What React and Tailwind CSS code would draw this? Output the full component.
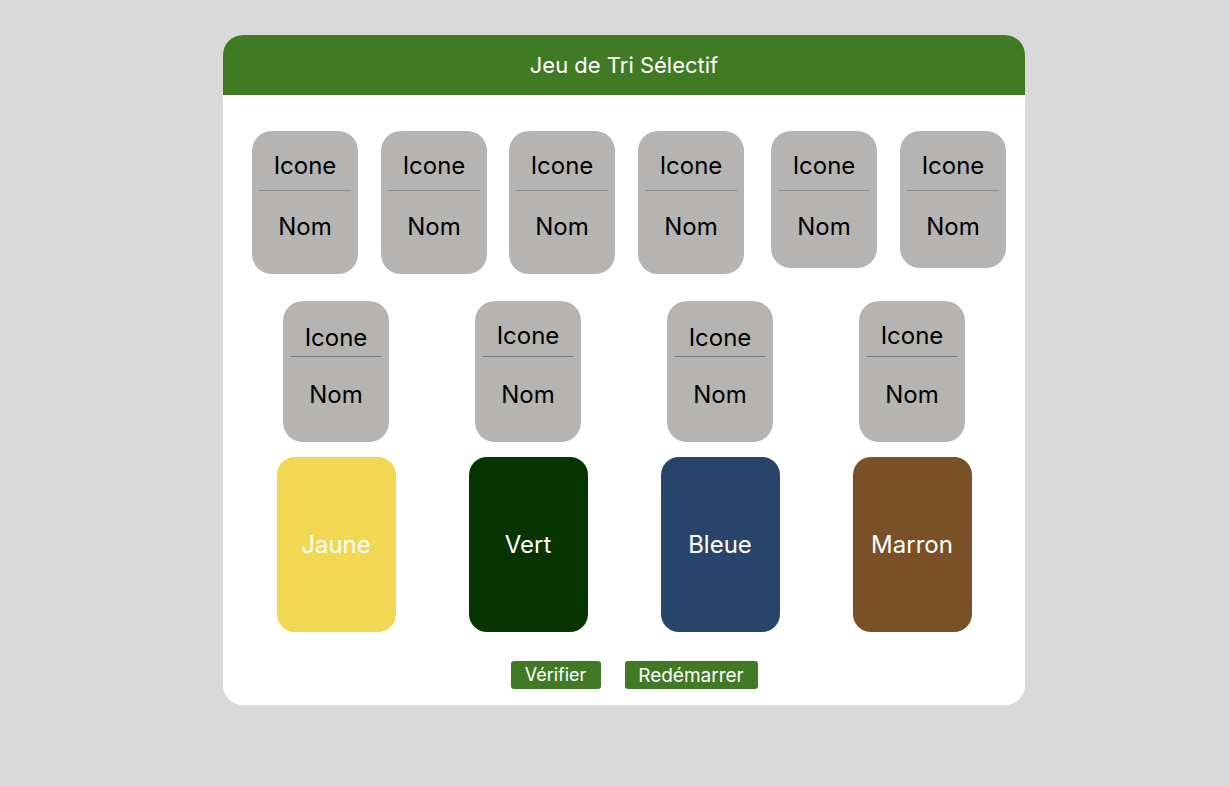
export default function App() {
  const topRow = [
    { ml: "ml-0", h: "h-[143px]" },
    { ml: "ml-[23px]", h: "h-[143px]" },
    { ml: "ml-[22px]", h: "h-[143px]" },
    { ml: "ml-[23px]", h: "h-[143px]" },
    { ml: "ml-[27px]", h: "h-[137px]" },
    { ml: "ml-[23px]", h: "h-[137px]" },
  ];
  const midRow = ["pt-[22px]", "pt-[20px]", "pt-[22px]", "pt-[20px]"];
  const bins = [
    { label: "Jaune", bg: "bg-[#f2d852]" },
    { label: "Vert", bg: "bg-[#073501]" },
    { label: "Bleue", bg: "bg-[#29446b]" },
    { label: "Marron", bg: "bg-[#7a5026]" },
  ];

  return (
    <div className="min-h-screen bg-[#d9d9d9] pt-[35px] font-['Inter',sans-serif]">
      <div className="ml-[223px] w-[802px] bg-white rounded-[20px] overflow-hidden">
        {/* Header */}
        <div className="h-[60px] bg-[#407a24] flex items-center justify-center text-white text-[22px]">
          Jeu de Tri Sélectif
        </div>

        {/* Top row */}
        <div className="flex items-start pl-[29px] pt-[36px]">
          {topRow.map((c, i) => (
            <div key={i} className={`${c.ml} ${c.h} w-[106px] rounded-[20px] bg-[#b5b4b2] pt-[20px] flex flex-col`}>
              <div className="text-center text-[24px] leading-[29px] text-black">Icone</div>
              <div className="mx-[7px] mt-[10px] h-px bg-[#8a8a8a]"></div>
              <div className="mt-[21px] text-center text-[24px] leading-[29px] text-black">Nom</div>
            </div>
          ))}
        </div>

        {/* Second row */}
        <div className="grid grid-cols-4 w-[768px] mx-auto mt-[27px]">
          {midRow.map((pt, i) => (
            <div key={i} className="flex justify-center">
              <div className={`w-[106px] h-[141px] rounded-[20px] bg-[#b5b4b2] ${pt} flex flex-col`}>
                <div className="text-center text-[24px] leading-[29px] text-black">Icone</div>
                <div className={`mx-[7px] h-px bg-[#7d7d7d] ${i % 2 === 0 ? "mt-[4px]" : "mt-[6px]"}`}></div>
                <div className="mt-[23px] text-center text-[24px] leading-[29px] text-black">Nom</div>
              </div>
            </div>
          ))}
        </div>

        {/* Bins */}
        <div className="grid grid-cols-4 w-[768px] mx-auto mt-[15px]">
          {bins.map((b) => (
            <div key={b.label} className="flex justify-center">
              <div className={`w-[119px] h-[175px] rounded-[18px] ${b.bg} flex items-center justify-center text-white text-[24px]`}>
                {b.label}
              </div>
            </div>
          ))}
        </div>

        {/* Buttons */}
        <div className="flex justify-center gap-[24px] mt-[29px] pb-[16px] pl-[20px]">
          <button className="h-[28px] w-[90px] rounded-[3px] bg-[#407a24] text-white text-[18px] leading-none">
            Vérifier
          </button>
          <button className="h-[28px] w-[133px] rounded-[3px] bg-[#407a24] text-white text-[19px] leading-none">
            Redémarrer
          </button>
        </div>
      </div>
    </div>
  );
}
